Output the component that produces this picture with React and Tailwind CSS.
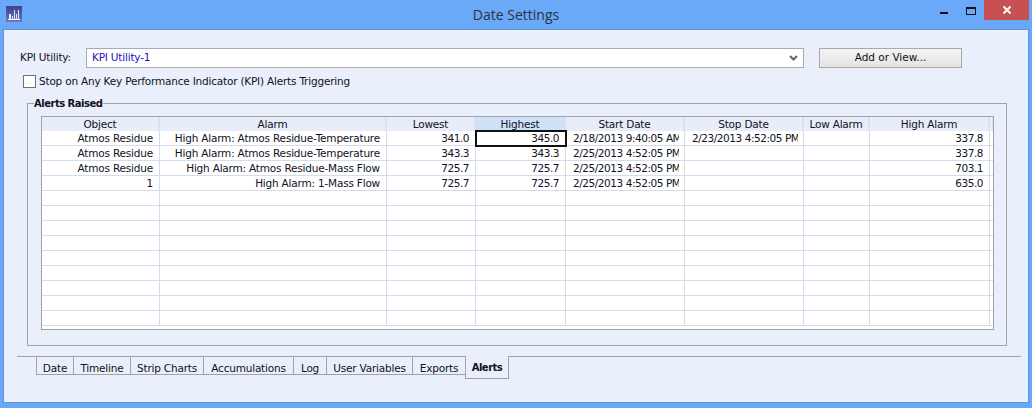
const FONT = "font-['DejaVu_Sans',sans-serif]";
const cols = [
  { w: 'w-[118px]', name: 'Object' },
  { w: 'w-[227px]', name: 'Alarm' },
  { w: 'w-[89px]', name: 'Lowest' },
  { w: 'w-[90px]', name: 'Highest', active: true },
  { w: 'w-[119px]', name: 'Start Date' },
  { w: 'w-[119px]', name: 'Stop Date' },
  { w: 'w-[66px]', name: 'Low Alarm' },
  { w: 'w-[120px]', name: 'High Alarm' },
  { w: 'w-[4px]', name: '' },
];
const rows = [
  ['Atmos Residue', 'High Alarm: Atmos Residue-Temperature', '341.0', '345.0', '2/18/2013 9:40:05 AM', '2/23/2013 4:52:05 PM', '', '337.8', ''],
  ['Atmos Residue', 'High Alarm: Atmos Residue-Temperature', '343.3', '343.3', '2/25/2013 4:52:05 PM', '', '', '337.8', ''],
  ['Atmos Residue', 'High Alarm: Atmos Residue-Mass Flow', '725.7', '725.7', '2/25/2013 4:52:05 PM', '', '', '703.1', ''],
  ['1', 'High Alarm: 1-Mass Flow', '725.7', '725.7', '2/25/2013 4:52:05 PM', '', '', '635.0', ''],
  ...Array.from({ length: 9 }, () => Array(9).fill('')),
];
const tabs = [
  ['Date', 'w-[37px]'], ['Timeline', 'w-[57px]'], ['Strip Charts', 'w-[73px]'], ['Accumulations', 'w-[90px]'],
  ['Log', 'w-[33px]'], ['User Variables', 'w-[86px]'], ['Exports', 'w-[53px]'],
];

function Cell({ col, text, rowIndex, colIndex }) {
  const selected = rowIndex === 0 && colIndex === 3;
  const left = colIndex >= 4 && colIndex <= 5;
  const numeric = colIndex >= 2;
  return (
    <div className={`${col.w} h-[15px] shrink-0 border-b border-r border-[#d3dcea] relative leading-[14px] ${numeric ? 'tracking-[-0.45px]' : ''} ${left ? 'pl-[7px] pr-[5px] text-left' : 'pr-[6px] text-right'} ${selected ? 'outline-2 -outline-offset-1 outline-[#111111] z-10' : ''}`}>
      <div className="overflow-hidden whitespace-nowrap h-full">{text}</div>
    </div>
  );
}

export default function App() {
  return (
    <div className={`${FONT} w-[1032px] h-[408px] bg-[#69a9f7] flex flex-col text-[10.5px] tracking-[-0.2px] text-[#111122] overflow-hidden`}>
      <div className="h-[29px] shrink-0 grid grid-cols-[1fr_auto_1fr] items-start">
        <svg className="ml-[6px] mt-[6px]" width="16" height="16" viewBox="0 0 16 16">
          <defs>
            <linearGradient id="iconBg" x1="0" y1="0" x2="0" y2="1">
              <stop offset="0" stopColor="#3e3f8f" />
              <stop offset="1" stopColor="#6f74c4" />
            </linearGradient>
          </defs>
          <rect width="16" height="16" fill="url(#iconBg)" />
          <path d="M3 8h2v5H3zM6 10h1v3H6zM8 4h1v9H8zM10 8h1v5h-1zM12 4h1v9h-1z" fill="#dfe4f8" />
          <rect x="2" y="13" width="12" height="1" fill="#ffffff" />
        </svg>
        <div className="text-center text-[14px] tracking-normal leading-[30px] text-[#2b3440] font-['Open_Sans',sans-serif]">Date Settings</div>
        <div className="flex items-start justify-end">
          <div className="w-[8px] h-[2px] mt-[12px] mr-[18px] bg-[#111111]" />
          <div className="w-[8px] h-[5px] mt-[7px] mr-[8px] border border-t-2 border-[#111111] box-content" />
          <div className="w-[45px] h-[20px] mr-[3px] bg-[#c75050] flex items-center justify-center">
            <svg width="10" height="10" viewBox="0 0 10 10"><path d="M1.5 1.5l7 7M8.5 1.5l-7 7" stroke="#fff" strokeWidth="2" /></svg>
          </div>
        </div>
      </div>
      <div className="mx-[3px] mb-[5px] flex-1 bg-[#e9f0fb] border border-[#5f94d6] flex flex-col pt-[18px]">
        <div className="flex items-center h-[20px] pl-[16px]">
          <span className="w-[66px]">KPI Utility:</span>
          <div className="w-[718px] h-[20px] bg-white border border-[#a9adb3] flex items-center justify-between pl-[5px] pr-[5px] text-[#1a12b8]">
            <span>KPI Utility-1</span>
            <svg width="9" height="7" viewBox="0 0 9 7"><path d="M1 1l3.5 3.5L8 1" fill="none" stroke="#5b6470" strokeWidth="2" /></svg>
          </div>
          <button className="ml-[15px] w-[143px] h-[20px] border border-[#a9a9a9] bg-gradient-to-b from-[#f4f4f4] to-[#e4e4e4] text-center tracking-normal">Add or View...</button>
        </div>
        <div className="flex items-center h-[14px] mt-[6px] pl-[19px]">
          <span className="w-[13px] h-[13px] border border-[#707070] bg-white shrink-0" />
          <span className="ml-[3px] mt-[2px]">Stop on Any Key Performance Indicator (KPI) Alerts Triggering</span>
        </div>
        <div className="relative ml-[23px] w-[980px] h-[243px] mt-[15px] border border-[#a3a3a3] pl-[13px] pt-[12px]">
          <span className="absolute left-[6px] -top-[7px] bg-[#e9f0fb] pr-[1px] font-bold text-[10px] tracking-[-0.5px] leading-[13px]">Alerts Raised</span>
          <div className="w-[953px] h-[214px] border border-[#a3a3a3] bg-white overflow-hidden">
            <div className="flex h-[14px] bg-[#e7eef9]">
              {cols.map((c, i) => (
                <div key={i} className={`${c.w} shrink-0 text-center leading-[14px] border-r-2 border-[#d8e2f1] ${c.active ? 'bg-[#cfe1f8]' : ''}`}>{c.name}</div>
              ))}
            </div>
            {rows.map((r, ri) => (
              <div key={ri} className="flex">
                {cols.map((c, ci) => <Cell key={ci} col={c} text={r[ci]} rowIndex={ri} colIndex={ci} />)}
              </div>
            ))}
          </div>
        </div>
        <div className="relative h-[23px] mt-[10px] ml-[13px] mr-[7px] border-t border-[#a3a3a3] flex items-start pl-[19px]">
          {tabs.map(([t, w]) => (
            <div key={t} className={`${w} h-[19px] -mt-px border-t border-l border-b border-[#a3a3a3] text-center leading-[23px] shrink-0`}>{t}</div>
          ))}
          <div className="w-[44px] h-[23px] -mt-px border border-t-0 border-[#a3a3a3] bg-[#e9f0fb] text-center font-bold text-[10px] tracking-[-0.5px] leading-[23px] shrink-0">Alerts</div>
        </div>
      </div>
    </div>
  );
}
